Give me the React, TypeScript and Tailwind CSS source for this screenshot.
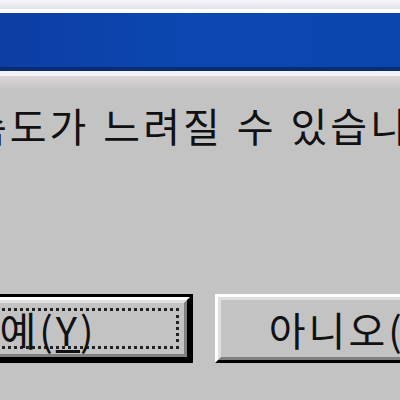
import React from "react";

const font = { fontFamily: '"Noto Sans CJK KR", "Noto Sans", sans-serif' };

function Button({ children, isDefault }: { children: React.ReactNode; isDefault?: boolean }) {
    const face = (
        <div className="h-full border-[3px] border-t-white border-l-white border-r-black border-b-black">
            <div className="h-full border-[3px] border-t-[#dfdfdf] border-l-[#dfdfdf] border-r-[#808080] border-b-[#808080] p-[5px]">
                <div className={`h-full flex items-center justify-center text-[40px] leading-none tracking-[3px] text-[#111] ${isDefault ? "border-[3px] border-dotted border-[#222]" : "border-[3px] border-transparent pl-[2px]"}`}>
                    {children}
                </div>
            </div>
        </div>
    );
    if (isDefault) {
        return <div className="w-[290px] h-[69px] shrink-0 border-[3px] border-black">{face}</div>;
    }
    return <div className="w-[290px] h-[69px] shrink-0">{face}</div>;
}

export default function App() {
    return (
        <div className="w-[400px] h-[400px] overflow-hidden bg-[#c3c3c3] flex flex-col" style={font}>
            {/* window frame + title bar */}
            <div className="h-[9px] bg-gradient-to-b from-[#f6f6fa] to-[#e2e2ea] shrink-0"></div>
            <div className="h-[4px] bg-white shrink-0"></div>
            <div className="h-[54px] bg-gradient-to-r from-[#0d3ea4] via-[#0b48b2] to-[#0b46ae] shrink-0"></div>
            <div className="h-[4px] bg-[#0a2c72] shrink-0"></div>
            <div className="h-[5px] bg-[#f2f2f8] shrink-0"></div>
            <div className="h-[13px] bg-gradient-to-b from-[#dcd6d8] to-[#c6c4c4] shrink-0"></div>

            {/* message */}
            <div className="mt-[16px] ml-[-30px] h-[40px] text-[40px] leading-[40px] text-[#111] whitespace-nowrap tracking-[3px] [word-spacing:2px]">
                속도가 느려질 수 있습니다.
            </div>

            {/* buttons */}
            <div className="mt-[149px] ml-[-97px] flex gap-[22px]">
                <Button isDefault>
                    예(<span className="underline underline-offset-[4px] decoration-[3px]">Y</span>)
                </Button>
                <Button>
                    아니오(<span className="underline underline-offset-[4px] decoration-[3px]">N</span>)
                </Button>
            </div>
        </div>
    );
}
